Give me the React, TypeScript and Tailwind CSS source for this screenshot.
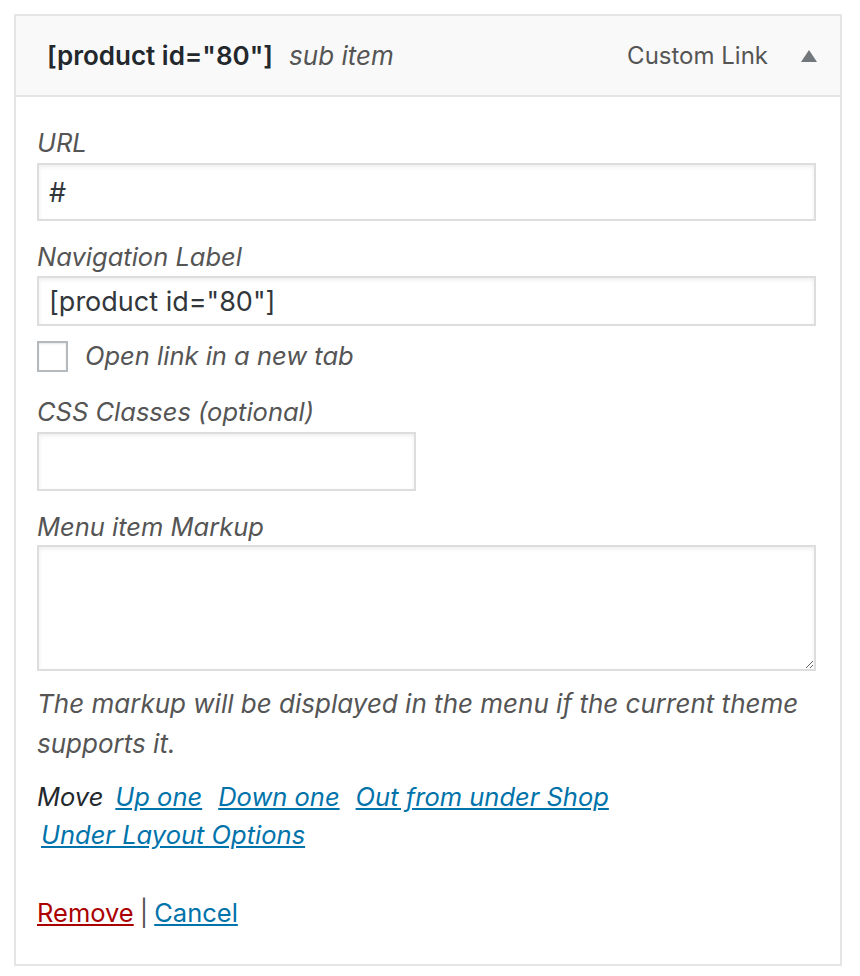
import React, { useState } from 'react';

const font = { fontFamily: 'Inter, "Noto Sans", "Liberation Sans", sans-serif' };

const App: React.FC = () => {
  const [url, setUrl] = useState('#');
  const [label, setLabel] = useState('[product id="80"]');
  const [newTab, setNewTab] = useState(false);
  const [classes, setClasses] = useState('');
  const [markup, setMarkup] = useState('');

  return (
    <div className="min-h-screen bg-white pt-[14px] px-[14px]" style={font}>
      <div className="w-[828px] border-2 border-[#e5e5e5] bg-white">
        <div className="flex items-center h-[81px] bg-[#f9f9f9] border-b-2 border-[#e5e5e5] pl-[31px] pr-[22px]">
          <span className="text-[26px] font-semibold text-[#23282d]">{label}</span>
          <span className="ml-[16px] text-[26px] italic text-[#555]">sub item</span>
          <span className="ml-auto text-[24px] text-[#555]">Custom Link</span>
          <svg width="18" height="14" viewBox="0 0 18 14" className="ml-[32px]">
            <polygon points="9,1 17,13 1,13" fill="#72777c" />
          </svg>
        </div>

        <div className="pl-[21px] pr-[24px] pt-[30px] pb-[32px] text-[25.5px] text-[#555]">
          <label className="block italic leading-[32px]">URL</label>
          <input
            value={url}
            onChange={(e) => setUrl(e.target.value)}
            className="mt-[4px] block w-full h-[58px] border-2 border-[#ddd] px-[10px] text-[27px] text-[#32373c] outline-none shadow-[inset_0_2px_4px_rgba(0,0,0,0.07)]"
          />

          <label className="mt-[20px] block italic leading-[32px]">Navigation Label</label>
          <input
            value={label}
            onChange={(e) => setLabel(e.target.value)}
            className="mt-[3px] block w-full h-[50px] border-2 border-[#ddd] px-[10px] text-[27px] text-[#32373c] outline-none shadow-[inset_0_2px_4px_rgba(0,0,0,0.07)]"
          />

          <label className="mt-[14px] flex items-center italic">
            <input
              type="checkbox"
              checked={newTab}
              onChange={(e) => setNewTab(e.target.checked)}
              className="appearance-none w-[31px] h-[31px] border-2 border-[#b4b9be] bg-white shadow-[inset_0_1px_2px_rgba(0,0,0,0.1)]"
            />
            <span className="ml-[17px] leading-[32px]">Open link in a new tab</span>
          </label>

          <label className="mt-[24px] block italic leading-[32px]">CSS Classes (optional)</label>
          <input
            value={classes}
            onChange={(e) => setClasses(e.target.value)}
            className="mt-[4px] block w-[379px] h-[59px] border-2 border-[#ddd] px-[10px] text-[27px] text-[#32373c] outline-none shadow-[inset_0_2px_4px_rgba(0,0,0,0.07)]"
          />

          <label className="mt-[20px] block italic leading-[32px]">Menu item Markup</label>
          <textarea
            value={markup}
            onChange={(e) => setMarkup(e.target.value)}
            className="mt-[2px] block w-full h-[126px] border-2 border-[#ddd] px-[10px] text-[27px] text-[#32373c] outline-none shadow-[inset_0_2px_4px_rgba(0,0,0,0.07)]"
          />

          <p className="mt-[13px] italic leading-[40px] text-[26px]">
            The markup will be displayed in the menu if the current theme supports it.
          </p>

          <div className="mt-[14px] italic leading-[38px]">
            <span className="text-[#23282d]">Move</span>
            <a href="#" className="ml-[12px] text-[#0073aa] underline">Up one</a>
            <a href="#" className="ml-[16px] text-[#0073aa] underline">Down one</a>
            <a href="#" className="ml-[16px] text-[#0073aa] underline">Out from under Shop</a>
            <br />
            <a href="#" className="ml-[4px] text-[#0073aa] underline">Under Layout Options</a>
          </div>

          <div className="mt-[40px] leading-[38px] text-[#555]">
            <a href="#" className="text-[#a00] underline">Remove</a>
            <span className="mx-[6px]">|</span>
            <a href="#" className="text-[#0073aa] underline">Cancel</a>
          </div>
        </div>
      </div>
    </div>
  );
};

export default App;
